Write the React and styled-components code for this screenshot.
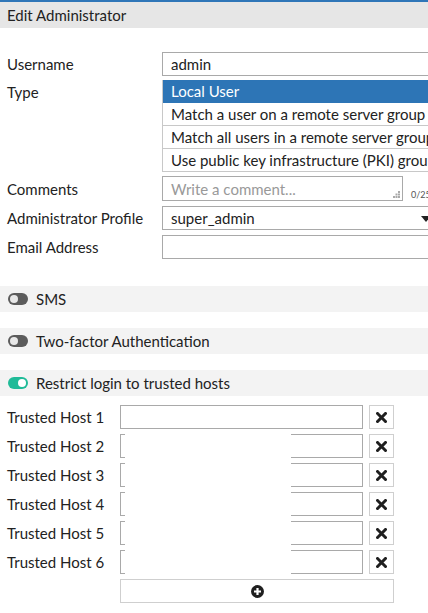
import React from 'react'
import styled, { createGlobalStyle } from 'styled-components'

const GlobalStyle = createGlobalStyle`
  html, body {
    margin: 0;
    padding: 0;
    background: #fff;
  }
  body {
    font-family: Lato, "Open Sans", sans-serif;
    font-size: 15px;
    color: #222;
  }
`

const typeOptions = [
  'Local User',
  'Match a user on a remote server group',
  'Match all users in a remote server group',
  'Use public key infrastructure (PKI) group',
]

const hosts = [1, 2, 3, 4, 5, 6]

const Page = styled.div`
  width: 428px;
  height: 613px;
  overflow: hidden;
  border-top: 2px solid #2f76b8;
  box-sizing: border-box;
`

const Header = styled.div`
  height: 26px;
  background: #e6e6e6;
  padding-left: 7px;
  display: flex;
  align-items: center;
  font-size: 15px;
  color: #222;
`

const Form = styled.div`
  display: flex;
  flex-direction: column;
  padding-top: 24px;
`

const Row = styled.div`
  display: grid;
  grid-template-columns: 162px 1fr;
  align-items: ${p => (p.$top ? 'start' : 'center')};
  margin-bottom: ${p => p.$gap || 5}px;
  white-space: nowrap;
`

const Label = styled.div`
  padding-left: 7px;
  line-height: 24px;
`

const Input = styled.div`
  height: 24px;
  box-sizing: border-box;
  border: 1px solid #a9a9a9;
  border-right: none;
  padding-left: 8px;
  display: flex;
  align-items: center;
  color: #222;
`

const OptionList = styled.div`
  display: flex;
  flex-direction: column;
  border-left: 1px solid #c8c8c8;
`

const Option = styled.div`
  height: 23px;
  box-sizing: border-box;
  padding-left: 8px;
  display: flex;
  align-items: center;
  overflow: hidden;
  background: ${p => (p.$active ? '#2d75b6' : '#fff')};
  color: ${p => (p.$active ? '#fff' : '#222')};
  border-bottom: 1px solid ${p => (p.$active ? '#2d75b6' : '#c8c8c8')};
`

const CommentWrap = styled.div`
  display: flex;
  align-items: flex-end;
  gap: 8px;
`

const TextArea = styled.div`
  position: relative;
  width: 241px;
  height: 25px;
  box-sizing: border-box;
  border: 1px solid #a9a9a9;
  padding-left: 8px;
  display: flex;
  align-items: center;
  color: #999;
  flex-shrink: 0;
`

const Grip = styled.svg`
  position: absolute;
  right: 2px;
  bottom: 2px;
`

const Counter = styled.span`
  font-size: 9px;
  color: #555;
  margin-bottom: 1px;
`

const Select = styled(Input)`
  position: relative;
`

const Caret = styled.span`
  position: absolute;
  right: -3px;
  top: 9px;
  width: 0;
  height: 0;
  border-left: 5px solid transparent;
  border-right: 5px solid transparent;
  border-top: 6px solid #222;
`

const Section = styled.div`
  height: 26px;
  background: #f3f3f3;
  display: flex;
  align-items: center;
  padding-left: 8px;
  gap: 8px;
  margin-top: ${p => p.$mt}px;
`

const Toggle = styled.span`
  position: relative;
  width: 20px;
  height: 12px;
  border-radius: 6px;
  background: ${p => (p.$on ? '#20bb98' : '#5c5c5c')};
  &::after {
    content: '';
    position: absolute;
    top: 2px;
    left: ${p => (p.$on ? '10px' : '2px')};
    width: 8px;
    height: 8px;
    border-radius: 50%;
    background: ${p => (p.$on ? '#fff' : '#e8e8e8')};
  }
`

const Hosts = styled.div`
  position: relative;
  display: flex;
  flex-direction: column;
  gap: 5px;
  margin-top: 9px;
`

const HostRow = styled.div`
  display: grid;
  grid-template-columns: 120px 243px 31px;
  align-items: center;
`

const HostInput = styled.div`
  height: 24px;
  box-sizing: border-box;
  border: 1px solid #a9a9a9;
`

const IconButton = styled.div`
  height: 24px;
  margin-left: 6px;
  box-sizing: border-box;
  border: 1px solid #cfcfcf;
  display: flex;
  align-items: center;
  justify-content: center;
`

const AddButton = styled(IconButton)`
  grid-column: 2 / 4;
  margin-left: 0;
`

const Mask = styled.div`
  position: absolute;
  left: 125px;
  top: 24px;
  width: 166px;
  height: 145px;
  background: #fff;
`

const XIcon = () => (
  <svg width="11" height="11" viewBox="0 0 11 11">
    <path d="M1.5 1.5 L9.5 9.5 M9.5 1.5 L1.5 9.5" stroke="#1f1f1f" strokeWidth="3" strokeLinecap="square" />
  </svg>
)

const PlusCircle = () => (
  <svg width="13" height="13" viewBox="0 0 13 13">
    <circle cx="6.5" cy="6.5" r="6.5" fill="#1f1f1f" />
    <path d="M6.5 3 V10 M3 6.5 H10" stroke="#fff" strokeWidth="2.2" />
  </svg>
)

export default function App() {
  return (
    <Page>
      <GlobalStyle />
      <Header>Edit Administrator</Header>
      <Form>
        <Row $gap={4}>
          <Label>Username</Label>
          <Input>admin</Input>
        </Row>
        <Row $top $gap={4}>
          <Label>Type</Label>
          <OptionList>
            {typeOptions.map((o, i) => (
              <Option key={o} $active={i === 0}>{o}</Option>
            ))}
          </OptionList>
        </Row>
        <Row $gap={5}>
          <Label>Comments</Label>
          <CommentWrap>
            <TextArea>
              Write a comment...
              <Grip width="7" height="7" viewBox="0 0 7 7">
                <g fill="#aaa">
                  <rect x="5" y="0" width="2" height="2" />
                  <rect x="2.5" y="2.5" width="2" height="2" />
                  <rect x="5" y="2.5" width="2" height="2" />
                  <rect x="0" y="5" width="2" height="2" />
                  <rect x="2.5" y="5" width="2" height="2" />
                  <rect x="5" y="5" width="2" height="2" />
                </g>
              </Grip>
            </TextArea>
            <Counter>0/255</Counter>
          </CommentWrap>
        </Row>
        <Row $gap={5}>
          <Label>Administrator Profile</Label>
          <Select>
            super_admin
            <Caret />
          </Select>
        </Row>
        <Row $gap={0}>
          <Label>Email Address</Label>
          <Input />
        </Row>

        <Section $mt={22}>
          <Toggle />
          SMS
        </Section>
        <Section $mt={16}>
          <Toggle />
          Two-factor Authentication
        </Section>
        <Section $mt={16}>
          <Toggle $on />
          Restrict login to trusted hosts
        </Section>

        <Hosts>
          {hosts.map(n => (
            <HostRow key={n}>
              <Label>Trusted Host {n}</Label>
              <HostInput />
              <IconButton><XIcon /></IconButton>
            </HostRow>
          ))}
          <HostRow>
            <AddButton><PlusCircle /></AddButton>
          </HostRow>
          <Mask />
        </Hosts>
      </Form>
    </Page>
  )
}
